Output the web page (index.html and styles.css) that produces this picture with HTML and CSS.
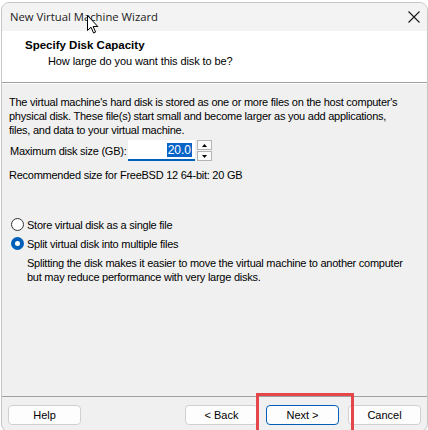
FILE: index.html
```html
<!DOCTYPE html>
<html lang="en">
<head>
    <meta charset="UTF-8">
    <title>New Virtual Machine Wizard</title>
    <link rel="stylesheet" href="styles.css">
</head>
<body>
    <div class="window">
        <div class="titlebar">
            <span class="title">New Virtual Machine Wizard</span>
            <span class="close">
                <svg width="12" height="12" viewBox="0 0 12 12"><path d="M0.5 0.5 L11.5 11.5 M11.5 0.5 L0.5 11.5" stroke="#1a1a1a" stroke-width="1.1" fill="none"/></svg>
            </span>
            <!-- puntero del ratón -->
            <svg class="cursor" width="12" height="19" viewBox="0 0 12 19"><path d="M0.5 0.5 L0.5 15.5 L4 12.2 L6.6 18 L8.6 17.1 L6.1 11.5 L10.8 11.5 Z" fill="#fff" stroke="#000" stroke-width="1"/></svg>
        </div>

        <div class="header">
            <h1>Specify Disk Capacity</h1>
            <p>How large do you want this disk to be?</p>
        </div>

        <div class="content">
            <p class="intro">The virtual machine's hard disk is stored as one or more files on the host computer's physical disk. These file(s) start small and become larger as you add applications, files, and data to your virtual machine.</p>

            <div class="size-row">
                <label for="size">Maximum disk size (GB):</label>
                <div class="spin-input"><span class="sel">20.0</span></div>
                <div class="spin">
                    <span class="spin-btn">
                        <svg width="5" height="3" viewBox="0 0 5 3"><path d="M0 3 L2.5 0 L5 3 Z" fill="#000"/></svg>
                    </span>
                    <span class="spin-btn">
                        <svg width="5" height="3" viewBox="0 0 5 3"><path d="M0 0 L2.5 3 L5 0 Z" fill="#000"/></svg>
                    </span>
                </div>
            </div>

            <p class="recommended">Recommended size for FreeBSD 12 64-bit: 20 GB</p>

            <div class="options">
                <div class="radio-row">
                    <span class="radio"></span>
                    <span>Store virtual disk as a single file</span>
                </div>
                <div class="radio-row">
                    <span class="radio checked"></span>
                    <span>Split virtual disk into multiple files</span>
                </div>
                <p class="note">Splitting the disk makes it easier to move the virtual machine to another computer but may reduce performance with very large disks.</p>
            </div>
        </div>

        <div class="footer">
            <button class="btn">Help</button>
            <div class="spacer"></div>
            <button class="btn">&lt; Back</button>
            <div class="next-wrap">
                <button class="btn default">Next &gt;</button>
                <span class="highlight"></span>
            </div>
            <button class="btn">Cancel</button>
        </div>
    </div>
</body>
</html>
```

FILE: styles.css
```css
body {
    margin: 0;
    background: #ffffff;
    font-family: "Liberation Sans", Arial, sans-serif;
    font-size: 11px;
    letter-spacing: -0.25px;
    color: #000;
    overflow: hidden;
}

.window {
    margin: 2px 0 0 1px;
    width: 425px;
    height: 428px;
    border: 1px solid #c6c6c6;
    border-radius: 8px;
    background: #f0f0f0;
    display: flex;
    flex-direction: column;
    overflow: hidden;
}

/* Barra de título */
.titlebar {
    position: relative;
    height: 28px;
    background: #f3f3f3;
    display: flex;
    align-items: center;
    padding: 0 0 2px 8px;
    box-sizing: border-box;
    font-family: "Open Sans", sans-serif;
    font-size: 11.3px;
    letter-spacing: 0;
    color: #1a1a1a;
}

.title {
    flex: 1;
}

.close {
    display: flex;
    padding: 2px 7px 0 0;
}

.cursor {
    position: absolute;
    left: 85px;
    top: 12px;
}

/* Encabezado blanco */
.header {
    background: #ffffff;
    height: 52px;
    border-bottom: 1px solid #a0a0a0;
    box-shadow: 0 1px 0 #ffffff;
    padding: 8px 0 0 23px;
    box-sizing: border-box;
}

.header h1 {
    margin: 0;
    font-size: 11.5px;
    letter-spacing: 0;
    font-weight: bold;
}

.header p {
    margin: 4px 0 0 23px;
    letter-spacing: -0.1px;
}

/* Contenido */
.content {
    flex: 1;
    padding: 12px 7px 0 7px;
    display: flex;
    flex-direction: column;
}

.intro {
    margin: 0;
    max-width: 396px;
    line-height: 14px;
}

.size-row {
    display: flex;
    align-items: center;
    margin-top: 3px;
}

.size-row label {
    width: 118px;
    padding-left: 1px;
    white-space: nowrap;
}

.spin-input {
    width: 67px;
    height: 21px;
    background: #ffffff;
    border-bottom: 2px solid #005fb8;
    box-sizing: border-box;
    display: flex;
    justify-content: flex-end;
    align-items: center;
    padding: 1px 3px 0 0;
}

.sel {
    background: #0a64c8;
    color: #ffffff;
    font-size: 12px;
    letter-spacing: 0;
    line-height: 14px;
    padding: 0 1px;
}

.spin {
    display: flex;
    flex-direction: column;
    gap: 1px;
    margin-left: 2px;
}

.spin-btn {
    width: 15px;
    height: 10px;
    border: 1px solid #b4b4b4;
    background: #fbfbfb;
    box-sizing: border-box;
    display: flex;
    justify-content: center;
    align-items: center;
}

.recommended {
    margin: 8px 0 0 0;
}

.options {
    margin-top: 37px;
    display: flex;
    flex-direction: column;
    gap: 6px;
}

.radio-row {
    display: flex;
    align-items: center;
    gap: 3px;
    padding-left: 2px;
    height: 13px;
}

.radio {
    width: 13px;
    height: 13px;
    border: 1px solid #333;
    border-radius: 50%;
    box-sizing: border-box;
    background: #ffffff;
}

.radio.checked {
    border: 4px solid #005fb8;
    background: #ffffff;
}

.note {
    margin: 0 0 0 18px;
    line-height: 14px;
}

/* Pie con botones */
.footer {
    height: 35px;
    flex-shrink: 0;
    border-top: 1px solid #a0a0a0;
    display: flex;
    align-items: flex-start;
    padding: 8px 6px 0 6px;
    box-sizing: border-box;
}

.spacer {
    flex: 1;
}

.btn {
    width: 73px;
    height: 20px;
    border: 1px solid #d0d0d0;
    border-radius: 4px;
    background: #fdfdfd;
    font-family: "Liberation Sans", Arial, sans-serif;
    font-size: 11px;
    color: #000;
    padding: 0;
}

.btn.default {
    border-color: #005fb8;
}

.next-wrap {
    position: relative;
    margin: 0 9px 0 8px;
}

/* recuadro rojo de resaltado encima del botón */
.highlight {
    position: absolute;
    left: -10px;
    right: -15px;
    top: -12px;
    height: 60px;
    border: 3px solid #e5464a;
    box-sizing: border-box;
}
```
